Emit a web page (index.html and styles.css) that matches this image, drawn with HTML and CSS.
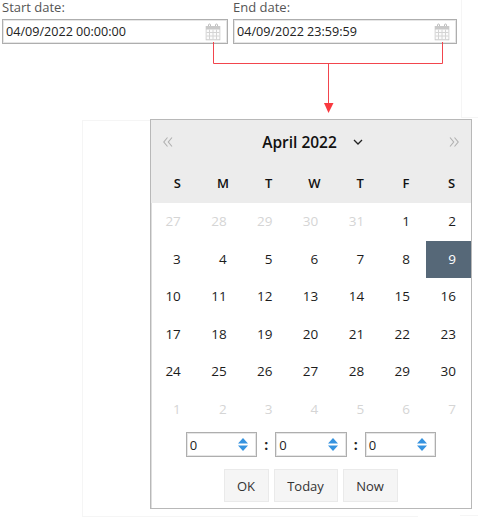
FILE: index.html
```html
<!DOCTYPE html>
<html>
	<head>
		<meta charset="utf-8">
		<title>Date range picker</title>
		<link rel="stylesheet" href="styles.css">
	</head>
	<body>
		<div class="ghost"></div>
		<div class="ghost-foot"></div>
		<div class="fields">
			<div class="field field-start">
				<label>Start date:</label>
				<div class="date-input">
					<span>04/09/2022 00:00:00</span>
					<svg class="cal-icon" width="16" height="18" viewBox="0 0 16 18">
						<path d="M3.500 3.500V2A1 1 0 0 1 5.500 2V3.500M10.500 3.500V2A1 1 0 0 1 12.500 2V3.500" fill="none" stroke="#bdbdbd" stroke-width="1"/>
						<path d="M.7 3H15.300V17.300H.7Z" fill="#c9c9c9"/>
						<path d="M1.500 6.500H14.500V16.300H1.500Z" fill="#fbfbfb"/>
						<path d="M4.500 6.500V16.500M8 6.500V16.500M11.500 6.500V16.500M1.500 9.500H14.500M1.500 13H14.500" stroke="#d4d4d4" stroke-width="1" fill="none"/>
					</svg>
				</div>
			</div>
			<div class="field field-end">
				<label>End date:</label>
				<div class="date-input">
					<span>04/09/2022 23:59:59</span>
					<svg class="cal-icon" width="16" height="18" viewBox="0 0 16 18">
						<path d="M3.500 3.500V2A1 1 0 0 1 5.500 2V3.500M10.500 3.500V2A1 1 0 0 1 12.500 2V3.500" fill="none" stroke="#bdbdbd" stroke-width="1"/>
						<path d="M.7 3H15.300V17.300H.7Z" fill="#c9c9c9"/>
						<path d="M1.500 6.500H14.500V16.300H1.500Z" fill="#fbfbfb"/>
						<path d="M4.500 6.500V16.500M8 6.500V16.500M11.500 6.500V16.500M1.500 9.500H14.500M1.500 13H14.500" stroke="#d4d4d4" stroke-width="1" fill="none"/>
					</svg>
				</div>
			</div>
			<div class="field-rest"></div>
		</div>
		<svg class="connector" width="478" height="120">
			<path d="M213.500 42V63.500H442.500V42M328.500 63.500V104" fill="none" stroke="#f2454d" stroke-width="1"/>
			<path d="M324 103H333.500L328.500 113Z" fill="#f9393f"/>
		</svg>
		<div class="stage">
			<div class="calendar">
				<div class="cal-head">
					<div class="month-row">
						<svg class="nav" width="10" height="10" viewBox="0 0 10 10"><path d="M4.500 .5L.8 5L4.500 9.500M9 .5L5.300 5L9 9.500" fill="none" stroke="#b0b0b0" stroke-width="1.100"/></svg>
						<div class="month">April 2022
							<svg class="caret" width="10" height="6" viewBox="0 0 10 6"><path d="M1 1L5 5L9 1" fill="none" stroke="#222" stroke-width="1.300"/></svg>
						</div>
						<svg class="nav" width="10" height="10" viewBox="0 0 10 10"><path d="M1 .5L4.700 5L1 9.500M5.500 .5L9.200 5L5.500 9.500" fill="none" stroke="#b0b0b0" stroke-width="1.100"/></svg>
					</div>
					<div class="weekdays">
						<span>S</span><span>M</span><span>T</span><span>W</span><span>T</span><span>F</span><span>S</span>
					</div>
				</div>
				<div class="days">
					<span class="off">27</span><span class="off">28</span><span class="off">29</span><span class="off">30</span><span class="off">31</span><span>1</span><span>2</span>
					<span>3</span><span>4</span><span>5</span><span>6</span><span>7</span><span>8</span><span class="picked">9</span>
					<span>10</span><span>11</span><span>12</span><span>13</span><span>14</span><span>15</span><span>16</span>
					<span>17</span><span>18</span><span>19</span><span>20</span><span>21</span><span>22</span><span>23</span>
					<span>24</span><span>25</span><span>26</span><span>27</span><span>28</span><span>29</span><span>30</span>
					<span class="off">1</span><span class="off">2</span><span class="off">3</span><span class="off">4</span><span class="off">5</span><span class="off">6</span><span class="off">7</span>
				</div>
				<div class="time">
					<div class="spin">0<svg width="10" height="13" viewBox="0 0 10 13"><path d="M5 0L10 5.500H0ZM0 7.500H10L5 13Z" fill="#3593e0"/></svg></div>
					<b>:</b>
					<div class="spin">0<svg width="10" height="13" viewBox="0 0 10 13"><path d="M5 0L10 5.500H0ZM0 7.500H10L5 13Z" fill="#3593e0"/></svg></div>
					<b>:</b>
					<div class="spin">0<svg width="10" height="13" viewBox="0 0 10 13"><path d="M5 0L10 5.500H0ZM0 7.500H10L5 13Z" fill="#3593e0"/></svg></div>
				</div>
				<div class="actions">
					<button class="btn-ok">OK</button>
					<button class="btn-today">Today</button>
					<button class="btn-now">Now</button>
				</div>
			</div>
		</div>
	</body>
</html>
```

FILE: styles.css
```css
body {
	margin: 0;
	font-family: "Open Sans", sans-serif;
	color: #222;
	background: #fff;
	height: 517px;
	overflow: hidden;
}
.connector {
	position: absolute;
	left: 0;
	top: 0;
}
/* faint leftovers of the page behind the popup */
.ghost {
	position: absolute;
	left: 82px;
	top: 120px;
	width: 335px;
	height: 395px;
	border-left: 1px solid #f5f5f5;
	border-top: 1px solid #f5f5f5;
	border-bottom: 1px solid #f5f5f5;
}
.ghost-foot {
	position: absolute;
	left: 460px;
	top: 515px;
	width: 18px;
	border-top: 1px solid #f5f5f5;
}
.fields {
	display: flex;
	padding: 0 0 0 2px;
	gap: 5px;
	height: 119px;
}
.field-start {
	width: 226px;
}
.field-end {
	width: 224px;
}
.field-rest {
	flex: 1;
	height: 117px;
	margin-left: -1px;
	border-left: 1px solid #f5f5f5;
	border-bottom: 1px solid #f5f5f5;
}
label {
	display: block;
	font-size: 13px;
	line-height: 15px;
	height: 19px;
	color: #555;
}
.date-input {
	display: flex;
	align-items: center;
	justify-content: space-between;
	box-sizing: border-box;
	height: 25px;
	padding: 0 6px 0 3px;
	border: 1px solid #aeaeae;
	box-shadow: inset 0 0 0 1px #e6e6e6;
	font-size: 12.600px;
	background: #fff;
}
.stage {
	position: relative;
	padding-left: 150px;
}
.calendar {
	box-sizing: border-box;
	width: 322px;
	height: 390px;
	border: 1px solid #b8b8b8;
	box-shadow: inset 1px 0 0 #dedede;
	background: #fff;
}
.cal-head {
	background: #ececec;
	height: 83px;
}
.month-row {
	display: flex;
	align-items: center;
	justify-content: space-between;
	height: 44px;
	padding: 0 12px;
}
.month {
	display: flex;
	align-items: center;
	gap: 16px;
	margin-left: 3px;
	font-size: 15.500px;
	font-weight: 600;
	color: #111;
}
.weekdays {
	display: grid;
	grid-template-columns: repeat(7, 1fr);
}
.days {
	display: grid;
	grid-template-columns: repeat(6, 45.830px) 1fr;
	grid-auto-rows: 37.500px;
	font-size: 13.500px;
}
.weekdays span {
	text-align: center;
	padding-left: 7px;
	font-size: 13px;
	font-weight: 600;
	line-height: 38px;
	color: #111;
}
.days span {
	text-align: right;
	padding-right: 16px;
	line-height: 37px;
	color: #1c1c1c;
}
.days span:nth-child(7n) {
	padding-right: 15px;
}
.days .off {
	color: #d5d5d5;
}
.days .picked {
	background: #566878;
	color: #fff;
}
.time {
	display: flex;
	justify-content: center;
	align-items: center;
	margin-top: 4px;
}
.time b {
	width: 18px;
	text-align: center;
	font-size: 14px;
}
.spin {
	display: flex;
	align-items: center;
	justify-content: space-between;
	box-sizing: border-box;
	width: 71.500px;
	height: 25px;
	padding: 0 8px 0 3px;
	border: 1px solid #aeaeae;
	box-shadow: inset 0 0 0 1px #e6e6e6;
	font-size: 13px;
}
.actions {
	display: flex;
	justify-content: center;
	gap: 5px;
	margin-top: 12px;
	padding-right: 1px;
}
button {
	box-sizing: border-box;
	height: 33px;
	padding: 0;
	border: 1px solid #eaeaea;
	background: #f5f5f5;
	font: 500 13px "Open Sans", sans-serif;
	color: #333;
}
.btn-ok {
	width: 45px;
}
.btn-today {
	width: 64px;
}
.btn-now {
	width: 55px;
}
```
